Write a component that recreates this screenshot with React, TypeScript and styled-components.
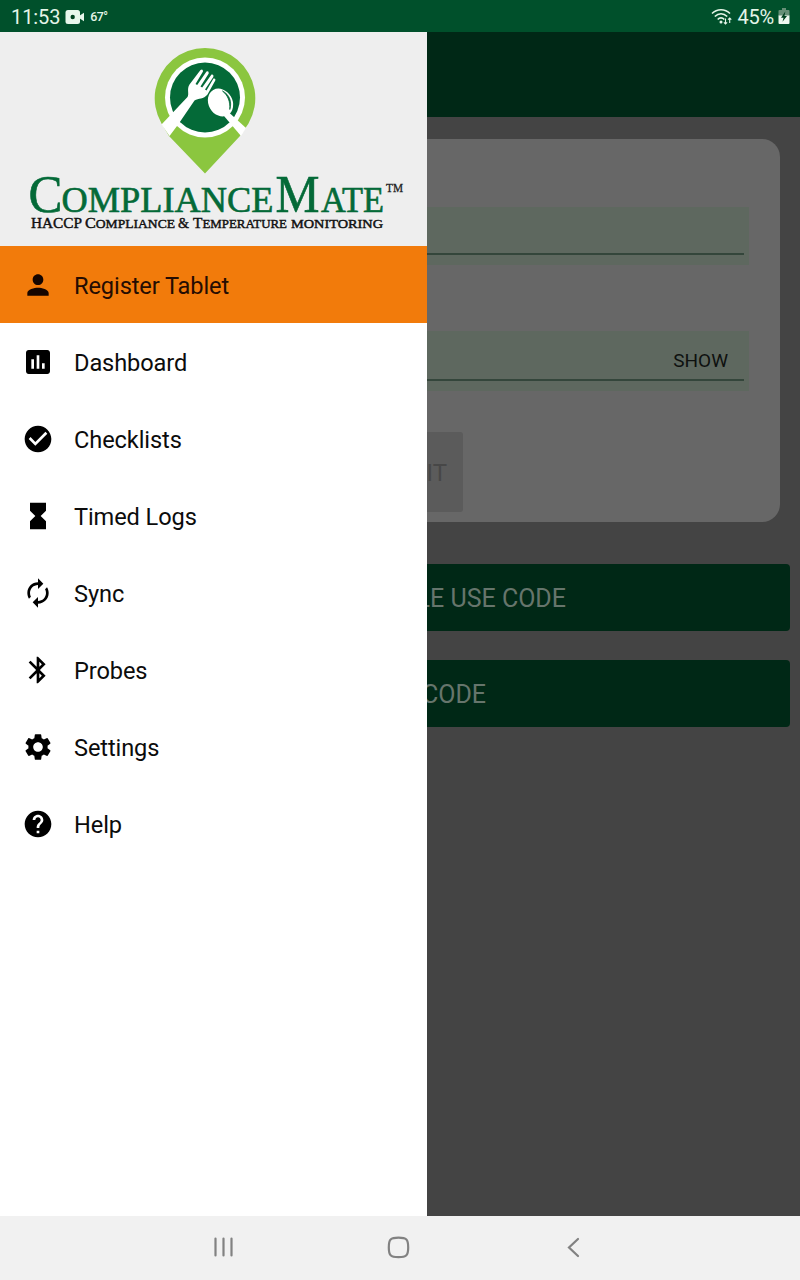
import React from "react";
import styled, { createGlobalStyle } from "styled-components";
import {
  MdPerson,
  MdAssessment,
  MdCheckCircle,
  MdHourglassFull,
  MdAutorenew,
  MdBluetooth,
  MdSettings,
  MdHelp,
} from "react-icons/md";

const GlobalStyle = createGlobalStyle`
  * { box-sizing: border-box; }
  body { margin: 0; font-family: Roboto, "Liberation Sans", sans-serif; }
`;

const Screen = styled.div`
  width: 800px;
  height: 1280px;
  display: flex;
  flex-direction: column;
  overflow: hidden;
`;

const StatusBar = styled.header`
  height: 32px;
  flex: none;
  display: flex;
  align-items: center;
  justify-content: space-between;
  padding: 2px 10px 0 11px;
  background: #00502b;
  color: #e4f5e8;
`;

const StatusGroup = styled.div<{ $gap: number }>`
  display: flex;
  align-items: center;
  gap: ${(p) => p.$gap}px;
`;

const StatusText = styled.span<{ $size: number; $weight?: number; $spacing?: number }>`
  font-size: ${(p) => p.$size}px;
  font-weight: ${(p) => p.$weight ?? 400};
  letter-spacing: ${(p) => p.$spacing ?? 0}px;
  line-height: 30px;
`;

const Main = styled.div`
  flex: 1;
  min-height: 0;
  display: flex;
`;

const Drawer = styled.nav`
  width: 427px;
  flex: none;
  background: #fff;
`;

const Brand = styled.div`
  height: 214px;
  background: #eee;

  svg {
    display: block;
  }
`;

const MenuItem = styled.a<{ $active?: boolean }>`
  height: 77px;
  display: flex;
  align-items: center;
  gap: 20px;
  padding-left: 22px;
  font-size: 23.6px;
  letter-spacing: -0.1px;
  line-height: 28px;
  color: ${(p) => (p.$active ? "#250c02" : "#0c0c0c")};
  background: ${(p) => (p.$active ? "#f27b0b" : "transparent")};

  svg {
    color: ${(p) => (p.$active ? "#150500" : "#000")};
  }
`;

const MenuLabel = styled.span`
  padding-top: 2px;
`;

const Page = styled.main`
  flex: 1;
  min-width: 0;
  overflow: hidden;
  background: #444;
`;

const AppBar = styled.div`
  height: 85px;
  background: #002816;
`;

const Card = styled.section`
  height: 383px;
  margin: 22px 20px 0 0;
  padding-top: 68px;
  border-radius: 0 18px 18px 0;
  background: #676767;
`;

const Field = styled.div<{ $height: number; $after: number }>`
  height: ${(p) => p.$height}px;
  margin: 0 31px ${(p) => p.$after}px 0;
  padding: 0 5px 10px 0;
  background: #5e685f;
`;

const FieldLine = styled.div`
  height: 100%;
  display: flex;
  align-items: center;
  justify-content: flex-end;
  padding: 11px 16px 0 0;
  border-bottom: 2px solid #34463b;
  font-size: 19px;
  line-height: 22px;
  color: #0e110f;
`;

const SubmitButton = styled.div`
  width: 36px;
  height: 80px;
  display: flex;
  align-items: center;
  justify-content: flex-end;
  padding: 2px 16px 0 0;
  overflow: hidden;
  border-radius: 0 3px 3px 0;
  background: #5b5b5b;
  color: #474747;
  font-size: 24px;
`;

const CodeButton = styled.div<{ $top: number; $labelEnd: number }>`
  height: 67px;
  margin: ${(p) => p.$top}px 10px 0 0;
  display: flex;
  align-items: center;
  border-radius: 0 4px 4px 0;
  background: #002816;
  color: #66756c;
  font-size: 25px;
  overflow: hidden;

  span {
    width: ${(p) => p.$labelEnd}px;
    display: flex;
    justify-content: flex-end;
    white-space: nowrap;
    padding-top: 2px;
  }
`;

const NavBar = styled.footer`
  height: 64px;
  flex: none;
  display: flex;
  align-items: center;
  gap: 145px;
  padding: 0 0 2px 208px;
  background: #f1f1f1;
`;

const CameraIcon = () => (
  <svg width="20" height="16" viewBox="0 0 20 16">
    <rect x="0.5" y="1" width="14.5" height="14" rx="2.5" fill="#e8f7ec" />
    <path d="M14 7l5-3.2v8.4L14 9z" fill="#e8f7ec" />
    <circle cx="7.7" cy="8" r="2.2" fill="#00401f" />
  </svg>
);

const WifiIcon = () => (
  <svg width="22" height="18" viewBox="0 0 22 18" fill="none" stroke="#e4f5e8" strokeWidth="1.6">
    <path d="M1 5.500C6 .5 14 .5 19 5.500M3.800 8.500C7.500 4.800 12.500 4.800 16.200 8.500M6.700 11.500c2-2.200 4.600-2.200 6.600 0" />
    <circle cx="10" cy="14" r="1.500" fill="#e4f5e8" stroke="none" />
    <path d="M14.500 10.500v5.500M12.900 14.300l1.600 1.700 1.600-1.700M18.700 15v-5M17.100 11.700l1.600-1.700 1.600 1.700" strokeWidth="1.100" />
  </svg>
);

const BatteryIcon = () => (
  <svg width="12" height="20" viewBox="0 0 12 20">
    <path d="M4 1h4v2h2.500a1 1 0 0 1 1 1v5H.5V4a1 1 0 0 1 1-1H4z" fill="#668f77" />
    <path d="M.5 8.500h11V16a1 1 0 0 1-1 1h-9a1 1 0 0 1-1-1z" fill="#eef8f0" />
    <path d="M7.300 4.500L3 10.700h2.500l-1 4L9 9H6.500z" fill="#00401f" />
  </svg>
);

const BrandLogo = () => (
  <svg width="427" height="214" viewBox="0 32 427 214" role="img" fontFamily="'Liberation Serif', serif">
    <path d="M205 173.500L169 136L161.500 123.500A50.300 50.300 0 1 1 248.500 123.500L240 136z" fill="#8bc63f" />
    <circle cx="205" cy="97.500" r="40" fill="#fff" />
    <circle cx="205" cy="97.500" r="35" fill="#046a38" />
    <g fill="#fff">
      <path d="M161.500 124.500L187.500 97C189.500 94 186.500 89 189.500 84.500L200.500 70Q203 68.500 203 71.500L195.500 84L197.200 85L206.500 71.500Q209 70.500 208.700 73.500L200.500 86.500L202.200 87.500L211.500 74.500Q214 74 213.300 77L205 89.500L206.500 90.500L213.500 78.500Q216 78 215.300 80.500L207.500 94.500C203.500 99.500 198.500 98 194.500 100.500L178.500 124L169.500 136z" />
      <ellipse cx="220.500" cy="102.500" rx="12" ry="14.500" transform="rotate(-30 220.500 102.500)" />
      <path d="M224 116l5-3.500L246 128l-5 8z" />
    </g>
    <path d="M222.500 91C230 95 232 102 229.800 109.500C230.300 101.500 228 95.500 222.500 91z" fill="#046a38" stroke="#046a38" strokeWidth="0.800" />
    <g fill="#046a38" stroke="#046a38" strokeWidth="0.600">
      <text x="28.500" y="212" fontSize="52" textLength="34" lengthAdjust="spacingAndGlyphs">C</text>
      <text x="61.500" y="212" fontSize="35.500" textLength="212" lengthAdjust="spacingAndGlyphs">OMPLIANCE</text>
      <text x="275.500" y="212" fontSize="52.500" textLength="44" lengthAdjust="spacingAndGlyphs">M</text>
      <text x="321" y="212" fontSize="35.500" textLength="63" lengthAdjust="spacingAndGlyphs">ATE</text>
    </g>
    <text x="386" y="191.700" fontSize="12" fill="#222" stroke="#222" strokeWidth="0.300" textLength="17" lengthAdjust="spacingAndGlyphs">TM</text>
    <g fill="#111" stroke="#111" strokeWidth="0.450">
      <text x="31" y="228" fontSize="15.500" textLength="51" lengthAdjust="spacingAndGlyphs">HACCP</text>
      <text x="85" y="228" fontSize="15.500" textLength="90" lengthAdjust="spacingAndGlyphs">C<tspan fontSize="13">OMPLIANCE</tspan></text>
      <text x="178" y="228" fontSize="15.500" textLength="11" lengthAdjust="spacingAndGlyphs">&amp;</text>
      <text x="193" y="228" fontSize="15.500" textLength="94" lengthAdjust="spacingAndGlyphs">T<tspan fontSize="13">EMPERATURE</tspan></text>
      <text x="291" y="228" fontSize="13" textLength="92" lengthAdjust="spacingAndGlyphs">MONITORING</text>
    </g>
  </svg>
);

const menu = [
  { label: "Register Tablet", Icon: MdPerson, active: true },
  { label: "Dashboard", Icon: MdAssessment },
  { label: "Checklists", Icon: MdCheckCircle },
  { label: "Timed Logs", Icon: MdHourglassFull },
  { label: "Sync", Icon: MdAutorenew },
  { label: "Probes", Icon: MdBluetooth },
  { label: "Settings", Icon: MdSettings },
  { label: "Help", Icon: MdHelp },
];

export default function App() {
  return (
    <Screen>
      <GlobalStyle />
      <StatusBar>
        <StatusGroup $gap={5}>
          <StatusText $size={20} $spacing={-0.1}>11:53</StatusText>
          <CameraIcon />
          <StatusText $size={12.5} $weight={500} $spacing={-0.6}>67°</StatusText>
        </StatusGroup>
        <StatusGroup $gap={4}>
          <WifiIcon />
          <StatusText $size={20} $spacing={-0.2}>45%</StatusText>
          <BatteryIcon />
        </StatusGroup>
      </StatusBar>
      <Main>
        <Drawer>
          <Brand>
            <BrandLogo />
          </Brand>
          {menu.map(({ label, Icon, active }) => (
            <MenuItem key={label} $active={active}>
              <Icon size={32} />
              <MenuLabel>{label}</MenuLabel>
            </MenuItem>
          ))}
        </Drawer>
        <Page>
          <AppBar />
          <Card>
            <Field $height={58} $after={66}>
              <FieldLine />
            </Field>
            <Field $height={60} $after={41}>
              <FieldLine>SHOW</FieldLine>
            </Field>
            <SubmitButton>IT</SubmitButton>
          </Card>
          <CodeButton $top={42} $labelEnd={139}>
            <span>LE USE CODE</span>
          </CodeButton>
          <CodeButton $top={29} $labelEnd={59}>
            <span>CODE</span>
          </CodeButton>
        </Page>
      </Main>
      <NavBar>
        <svg width="30" height="30" viewBox="0 0 30 30" stroke="#828282" strokeWidth="2.200" strokeLinecap="round">
          <path d="M7.500 6.500v17M15.500 6.500v17M23.500 6.500v17" />
        </svg>
        <svg width="30" height="30" viewBox="0 0 30 30" fill="none" stroke="#828282" strokeWidth="2.200">
          <path d="M15.500 5.700c8 0 9.700 1.700 9.700 9.700s-1.700 9.700-9.700 9.700-9.700-1.700-9.700-9.700 1.700-9.700 9.700-9.700z" />
        </svg>
        <svg width="30" height="30" viewBox="0 0 30 30" fill="none" stroke="#828282" strokeWidth="2.200" strokeLinecap="round">
          <path d="M20 7l-9 8.500 9 8.500" />
        </svg>
      </NavBar>
    </Screen>
  );
}
